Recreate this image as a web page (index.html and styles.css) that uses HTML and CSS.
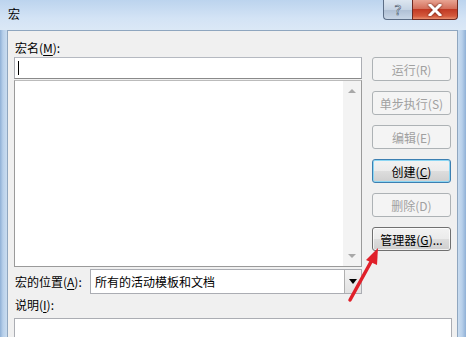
FILE: index.html
```html
<!DOCTYPE html>
<html lang="zh-CN">
<head>
    <meta charset="UTF-8">
    <title>宏</title>
    <link rel="stylesheet" href="styles.css">
</head>
<body>
    <div class="window">
        <div class="titlebar">
            <span class="title">宏</span>
            <div class="caption-btns">
                <div class="cap-btn help">?</div>
                <div class="cap-btn close">
                    <svg width="14" height="12" viewBox="0 0 14 12">
                        <path d="M2 1 L12 11 M12 1 L2 11" stroke="#fff" stroke-width="3" stroke-linecap="square"/>
                    </svg>
                </div>
            </div>
        </div>

        <div class="client">
            <div class="main">
                <div class="left-col">
                    <label class="lbl">宏名(<u>M</u>):</label>
                    <div class="name-input"><span class="caret"></span></div>
                    <div class="listbox">
                        <div class="list-area"></div>
                        <div class="vscroll">
                            <span class="arr up"></span>
                            <span class="arr down"></span>
                        </div>
                    </div>
                </div>
                <div class="btn-col">
                    <button class="btn" disabled>运行(R)</button>
                    <button class="btn" disabled>单步执行(S)</button>
                    <button class="btn" disabled>编辑(E)</button>
                    <button class="btn default">创建(<u>C</u>)</button>
                    <button class="btn" disabled>删除(D)</button>
                    <button class="btn">管理器(<u>G</u>)...</button>
                </div>
            </div>

            <div class="loc-row">
                <label class="lbl loc-lbl">宏的位置(<u>A</u>):</label>
                <div class="combo">
                    <span class="combo-text">所有的活动模板和文档</span>
                    <span class="combo-btn"><span class="tri"></span></span>
                </div>
            </div>

            <label class="lbl desc-lbl">说明(<u>I</u>):</label>
            <div class="desc"></div>
        </div>

        <!-- annotation arrow pointing at the organizer button -->
        <svg class="arrow" width="40" height="60" viewBox="0 0 40 60">
            <path d="M6 56 L28 16" stroke="#e0202a" stroke-width="3.5" stroke-linecap="round"/>
            <path d="M34 4 L22 16 L33 21 Z" fill="#e0202a"/>
        </svg>
    </div>
</body>
</html>
```

FILE: styles.css
```css
* {
    box-sizing: border-box;
}
body {
    margin: 0;
    font-family: "Noto Sans CJK SC", "Noto Sans", sans-serif;
    font-size: 12px;
    color: #000;
    background: #c9dcf0;
}
.window {
    position: relative;
    width: 466px;
    height: 337px;
    overflow: hidden;
    background: linear-gradient(to right, #8fb0d6 0px, #b8d0ea 3px, #c9dcf0 7px, #c9dcf0 458px, #b8d0ea 462px, #8fb0d6 466px);
}
.titlebar {
    height: 30px;
    display: flex;
    align-items: flex-start;
    justify-content: space-between;
    background: linear-gradient(to bottom, #bcd4ee, #d3e3f5 60%, #dbe8f6);
}
.title {
    padding: 6px 0 0 8px;
    font-size: 12px;
    line-height: 16px;
}
.caption-btns {
    display: flex;
    margin-right: 8px;
}
.cap-btn {
    height: 20px;
    display: flex;
    align-items: center;
    justify-content: center;
    border: 1px solid #5c6e86;
    border-top: none;
}
.help {
    width: 29px;
    border-radius: 0 0 0 4px;
    background: linear-gradient(to bottom, #dde6f0, #c5d3e3 50%, #aebfd4 51%, #c8d6e6);
    color: #f4f7fb;
    font-family: "DejaVu Sans", sans-serif;
    font-size: 14px;
    -webkit-text-stroke: 0.6px #4a5a70;
    border-right: none;
}
.close {
    width: 46px;
    border-radius: 0 0 4px 0;
    border-color: #6e2a22;
    background: linear-gradient(to bottom, #e8a493, #d4705c 45%, #c13a24 50%, #d4593c 85%, #e89070);
}
.close svg {
    filter: drop-shadow(0 0 1px #5a1a10);
}
.client {
    height: 307px;
    margin: 0 8px 0 7px;
    background: #f0f0f0;
    border: 1px solid #8fa6bf;
    border-bottom: none;
    padding: 8px 0 0 6px;
}
.main {
    display: grid;
    grid-template-columns: 348px 79px;
    column-gap: 10px;
}
.lbl {
    display: block;
    line-height: 18px;
    height: 18px;
    padding-left: 1px;
}
.lbl u {
    text-underline-offset: 2px;
}
.name-input {
    height: 22px;
    background: #fff;
    border: 1px solid #abadb3;
    border-top-color: #b5b9c1;
    border-bottom-color: #8a8a8a;
    padding: 3px 0 0 3px;
}
.caret {
    display: block;
    width: 1px;
    height: 14px;
    background: #000;
}
.listbox {
    margin-top: 1px;
    height: 187px;
    border: 1px solid #9a9a9a;
    border-top-color: #bbb;
    background: #fff;
    display: flex;
}
.list-area {
    flex: 1;
}
.vscroll {
    width: 18px;
    background: #f3f3f3;
    display: flex;
    flex-direction: column;
    justify-content: space-between;
    align-items: center;
    padding: 8px 0 8px;
}
.arr {
    width: 0;
    height: 0;
    border-left: 4px solid transparent;
    border-right: 4px solid transparent;
}
.arr.up {
    border-bottom: 4px solid #a8a8a8;
}
.arr.down {
    border-top: 4px solid #a8a8a8;
}
.btn-col {
    padding-top: 18px;
    display: flex;
    flex-direction: column;
    gap: 10px;
}
.btn {
    height: 24px;
    width: 79px;
    font-family: inherit;
    font-size: 12px;
    padding: 0;
    border: 1px solid #707070;
    border-radius: 3px;
    color: #000;
    background: linear-gradient(to bottom, #f2f2f2, #ebebeb 50%, #dddddd 51%, #cfcfcf);
    box-shadow: inset 0 0 0 1px rgba(255, 255, 255, 0.7);
}
.btn:disabled {
    color: #a0a0a0;
    border-color: #adb2b5;
    background: #f4f4f4;
    box-shadow: none;
}
.btn.default {
    border-color: #3c7fb1;
    box-shadow: inset 0 0 0 1px #8cd6f3;
}
.loc-row {
    display: flex;
    align-items: center;
    margin-top: 2px;
    height: 25px;
}
.loc-lbl {
    width: 76px;
}
.combo {
    width: 272px;
    height: 25px;
    background: #fff;
    border: 1px solid #abadb3;
    display: flex;
    align-items: center;
    justify-content: space-between;
}
.combo-text {
    padding-left: 4px;
}
.combo-btn {
    width: 17px;
    height: 23px;
    border-left: 1px solid #b0b0b0;
    background: linear-gradient(to bottom, #f2f2f2, #e2e2e2);
    display: flex;
    align-items: center;
    justify-content: center;
}
.tri {
    width: 0;
    height: 0;
    border-left: 4px solid transparent;
    border-right: 4px solid transparent;
    border-top: 5px solid #000;
}
.desc-lbl {
    margin-top: 2px;
}
.desc {
    margin-top: 4px;
    width: 438px;
    height: 40px;
    background: #fff;
    border: 1px solid #abadb3;
}
.arrow {
    position: absolute;
    left: 344px;
    top: 244px;
}
```
